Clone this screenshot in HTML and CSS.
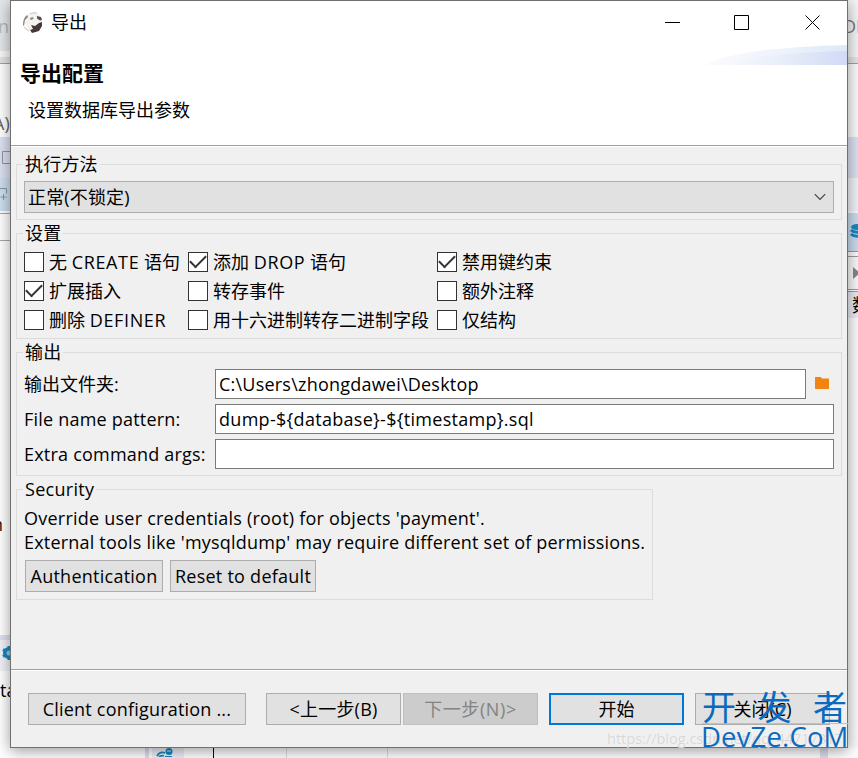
FILE: index.html
```html
<!DOCTYPE html>
<html lang="zh-CN">
<head>
<meta charset="utf-8">
<title>导出</title>
<link rel="stylesheet" href="styles.css">
</head>
<body>
<div class="desk">
  <div class="strip left">
    <div class="s h51 steel"><span class="ghost n1">n</span></div>
    <div class="s h6 pale"></div>
    <div class="s h7 bar"></div>
    <div class="s h73 white"><span class="ghost a1">A)</span></div>
    <div class="s h41 lav"><svg width="10" height="16" viewBox="0 0 10 16"><path d="M10 1.500H2.500v12H10" fill="none" stroke="#8d93a5"/></svg></div>
    <div class="s h35 blue"><svg width="10" height="22" viewBox="0 0 10 22"><path d="M0 4.500h6.500v5M3.500 10v6M.5 13h6" fill="none" stroke="#8296a8"/></svg></div>
    <div class="s h27 white line"></div>
    <div class="s h395 white line"><span class="ghost n2">n</span></div>
    <div class="s h5 lav"></div>
    <div class="s h31 mist"><svg class="gear" width="10" height="16" viewBox="0 0 10 16"><circle cx="9" cy="8" r="4.500" fill="none" stroke="#1687bd" stroke-width="3"/><path d="M9 1v14M3 4.500l12 7M3 11.500l12-7" stroke="#1687bd" stroke-width="3"/><circle cx="9" cy="8" r="2.500" fill="#8dc8e8"/></svg></div>
    <div class="s rest white"><span class="ghost ta">ta</span></div>
  </div>

  <main class="window">
    <header class="head">
      <div class="titlebar">
        <svg class="app" width="22" height="22" viewBox="0 0 22 22">
          <path d="M4 3Q10-1 17 2l3 6-2 8-6 5-5-3-4-7z" fill="#f5f3f2"/>
          <path d="M5 3Q1 6 1 13l1 1 1-6 3-3z" fill="#8e8481"/>
          <path d="M8 2q4-2 7-1" stroke="#c8c2bf" fill="none"/>
          <path d="M15 4l4 1 1 3-2 .5-3-2z" fill="#5a4d4b"/>
          <path d="M8 6l3-1 .5 2-3 1z" fill="#8b817d"/>
          <path d="M9 13l4 1 4-3 3-1v4l-3 5-7 2-2-3 3-1z" fill="#463936"/>
          <path d="M2 15l3 3 2 1" stroke="#ddd8d5" fill="none" stroke-width="1.500"/>
        </svg>
        <span class="caption">导出</span>
        <svg class="sys" width="158" height="17" viewBox="0 0 158 17"><path d="M1 8.500h15M70.500 1.500h14v14h-14zM141.500 1.500l14 14M155.500 1.500l-14 14" fill="none" stroke="#000"/></svg>
      </div>
      <svg class="swoosh" width="141" height="20" viewBox="0 0 141 20">
        <defs><linearGradient id="g"><stop offset="0" stop-color="#fafbfe"/><stop offset=".5" stop-color="#eff3fb"/><stop offset="1" stop-color="#dfe8f7"/></linearGradient><linearGradient id="h"><stop offset="0" stop-color="#f4f7fd" stop-opacity="0"/><stop offset="1" stop-color="#d0daf4"/></linearGradient></defs>
        <path d="M0 20Q28 3 141 0v20z" fill="url(#g)"/><path d="M10 20Q55 8 141 6v14z" fill="url(#h)"/>
      </svg>
      <h1>导出配置</h1>
      <p>设置数据库导出参数</p>
    </header>

    <section class="content">
      <fieldset class="g-method"><legend>执行方法</legend>
        <div class="combo"><span>正常(不锁定)</span><svg width="12" height="8" viewBox="0 0 12 8"><path d="M.8 1.200L6 6.400l5.200-5.200" fill="none" stroke="#444" stroke-width="1.200"/></svg></div>
      </fieldset>
      <fieldset class="g-set"><legend>设置</legend>
        <div class="checks">
          <label><i></i><span>无 <b>CREATE</b> 语句</span></label>
          <label><i class="on"></i><span>添加 <b>DROP</b> 语句</span></label>
          <label><i class="on"></i><span>禁用键约束</span></label>
          <label><i class="on"></i><span>扩展插入</span></label>
          <label><i></i><span>转存事件</span></label>
          <label><i></i><span>额外注释</span></label>
          <label><i></i><span>删除 <b>DEFINER</b></span></label>
          <label><i></i><span>用十六进制转存二进制字段</span></label>
          <label><i></i><span>仅结构</span></label>
        </div>
      </fieldset>
      <fieldset class="g-out"><legend>输出</legend>
        <div class="row"><span class="lab">输出文件夹:</span><div class="field f1">C:\Users\zhongdawei\Desktop</div>
          <svg class="folder" width="14" height="13" viewBox="0 0 14 13"><path d="M0 0h6l1 1.500h7V12H0z" fill="#f28511"/></svg></div>
        <div class="row"><span class="lab en-text">File name pattern:</span><div class="field f2">dump-${database}-${timestamp}.sql</div></div>
        <div class="row"><span class="lab en-text">Extra command args:</span><div class="field"></div></div>
      </fieldset>
      <fieldset class="g-sec"><legend>Security</legend>
        <p class="p1">Override user credentials (root) for objects 'payment'.</p>
        <p class="p2">External tools like 'mysqldump' may require different set of permissions.</p>
        <div class="btns"><button class="auth">Authentication</button><button class="reset">Reset to default</button></div>
      </fieldset>
    </section>

    <footer class="foot">
      <button class="client">Client configuration ...</button>
      <button class="back">&lt;上一步(B)</button>
      <button class="next" disabled>下一步(N)&gt;</button>
      <button class="start">开始</button>
      <button class="close">关闭(C)</button>
    </footer>
  </main>

  <div class="strip right">
    <div class="s h57 r1"><span class="ghost di">DI</span></div>
    <div class="s h7 bar"></div>
    <div class="s h73 r2"></div>
    <div class="s h41 r3"></div>
    <div class="s h35 r4"></div>
    <div class="s h39 r5"><svg width="10" height="18" viewBox="0 0 10 18"><ellipse cx="9" cy="4" rx="6" ry="3" fill="#1687bd"/><path d="M3 7q3 3 9 2M3 11q3 3 9 2" stroke="#1687bd" stroke-width="3" fill="none"/></svg></div>
    <div class="s gap"></div>
    <div class="s h34 r6"><svg width="10" height="14" viewBox="0 0 10 14"><path d="M5 1l7 6-7 6z" fill="#858585"/></svg></div>
    <div class="s h27 r7"><span class="ghost sh">数</span></div>
    <div class="s rest r2"></div>
  </div>

  <div class="under">
    <span class="u bar1"></span>
    <span class="u tab"><svg width="18" height="9" viewBox="0 0 18 9"><path d="M1 8q3-5 8-3M3 9q2-2 5-1" stroke="#1687bd" stroke-width="1.800" fill="none"/><circle cx="13" cy="3.500" r="3.500" fill="#1687bd"/><path d="M11 3h4" stroke="#d5edf8"/><path d="M9 8.500h7" stroke="#1687bd"/></svg></span>
    <span class="u c1"></span><span class="u c2"></span><span class="u c3"></span><span class="u bar2"></span>
  </div>
</div>
<div class="url">https://blog.csdn.net/qq_44717317</div>
<div class="mark"><div class="cn"><span>开</span><span>发</span><span>者</span></div><div class="en">DevZe.CoM</div></div>
</body>
</html>
```
FILE: styles.css
```css
* { box-sizing: border-box; }
body { margin: 0; width: 858px; height: 758px; overflow: hidden; background: #fff; color: #000;
  font: 18px/24px "Open Sans", "Noto Sans CJK SC", sans-serif; }
.desk { display: grid; grid-template-columns: 10px 838px 10px; grid-template-rows: 748px 10px; height: 758px; }

.strip { display: flex; flex-direction: column; overflow: hidden; }
.s { flex: none; display: flex; align-items: center; overflow: hidden; }
.s.rest { flex: 1; align-items: flex-start; }
.h5 { height: 5px; } .h6 { height: 6px; } .h7 { height: 7px; } .h27 { height: 27px; } .h34 { height: 34px; }
.h31 { height: 31px; } .h35 { height: 35px; } .h39 { height: 39px; } .h41 { height: 41px; }
.h51 { height: 51px; } .h57 { height: 57px; } .h73 { height: 73px; } .h395 { height: 395px; }
.steel { background: #e3e7ea; } .pale { background: #f7f7f7; } .white { background: #fff; }
.bar { background: #e3e3e3; border-bottom: 1px solid #a0a0a0; }
.lav { background: #dce0f0; } .blue { background: #cddeee; border-bottom: 2px solid #fff; } .mist { background: #f0f2f8; }
.line { border-top: 1px solid #a6a6a6; }
.ghost { flex: none; white-space: nowrap; }
.n1 { color: #b5b8bb; margin-left: -2px; }
.a1 { color: #666; margin: 44px 0 0 -7px; }
.n2 { color: #301010; margin: 172px 0 0 -8px; }
.gear { margin-bottom: 6px; }
.ta { margin-top: 7px; }
.r1 { background: #f4f4f4; } .r2 { background: #fafafa; } .r3 { background: #dce0f0; }
.r4 { background: #f0f1f8; border-bottom: 2px solid #fafafa; } .r5 { background: #c9daeb; border-bottom: 1px solid #999; }
.gap { height: 4px; background: #fafafa; }
.r6 { background: #f7f7f7; border-top: 1px solid #999; border-bottom: 1px solid #999; } 
.r7 { background: #e8eaf3; border-top: 1px solid #999; margin-top: 1px; }
.di { color: #777; margin: -6px 0 0 -5px; } .sh { margin-left: 4px; }

.window { display: flex; flex-direction: column; border: 1px solid #707070; background: #f0f0f0; z-index: 1;
  box-shadow: 0 3px 14px rgba(0,0,0,.4); }
.head { height: 145px; background: #fff; border-bottom: 1px solid #a0a0a0; box-shadow: 0 1px #fff; display: flex; flex-direction: column; }
.titlebar { height: 42px; display: flex; align-items: center; padding: 0 25px 0 11px; }
.app { margin-top: 2px; }
.caption { margin-left: 7px; flex: 1; }
.swoosh { align-self: flex-end; flex: none; margin-top: 2px; }
h1 { margin: -4px 0 0 9px; font-size: 21px; font-weight: 700; line-height: 24px; }
.head p { margin: 13px 0 0 17px; }

.content { height: 523px; padding: 6px 5px 0; display: flex; flex-direction: column; align-items: stretch; }
fieldset { margin: 0; min-width: 0; border: 1px solid #dcdcdc; padding: 0 7px; }
legend { padding: 0 2px; margin-left: -1px; height: 24px; line-height: 24px; letter-spacing: .2px; }
.g-method { height: 68px; }
.combo { margin-top: 5px; height: 32px; border: 1px solid #adadad; background: #e1e1e1; display: flex; align-items: center; justify-content: space-between; padding: 0 7px 0 3px; letter-spacing: .15px; }
.g-set { height: 118px; margin-top: 1px; }
.checks { display: grid; grid-template-columns: 164px 249px 1fr; grid-auto-rows: 29px; margin-top: 2px; }
.checks label { display: flex; align-items: center; white-space: nowrap; }
.checks i { width: 20px; height: 20px; background: #fff; border: 1px solid #333; margin-right: 5px; display: flex; align-items: center; justify-content: center; }
.checks i.on::after { content: ""; width: 14px; height: 7px; border: solid #333; border-width: 0 0 2px 2px; transform: translateY(-2px) rotate(-45deg); }
b { font-weight: inherit; letter-spacing: .65px; }
.g-out { height: 136px; margin-top: 1px; }
.row { display: flex; align-items: center; height: 35px; }
.g-out legend + .row { margin-top: 2px; }
.lab { width: 191px; flex: none; white-space: nowrap; }
.en-text { letter-spacing: .21px; }
.field { flex: 1; height: 30px; border: 1px solid #7a7a7a; background: #fff; padding: 0 3px; line-height: 28px; white-space: nowrap; }
.f1 { letter-spacing: .22px; } .f2 { letter-spacing: .29px; }
.folder { margin: 0 5px 0 9px; }
.g-sec { width: 637px; height: 123px; margin-top: 1px; }
.g-sec legend { letter-spacing: .3px; }
.g-sec p { margin: 0; white-space: nowrap; }
.g-sec .p1 { margin-top: 5px; letter-spacing: .23px; }
.g-sec .p2 { letter-spacing: .2px; }
button { font: inherit; color: #000; height: 32px; padding: 0; border: 1px solid #adadad; background: #e1e1e1; white-space: nowrap; flex: none; }
.btns { display: flex; gap: 7px; margin: 6px 0 0 1px; letter-spacing: .25px; }
.btns button { letter-spacing: .25px; }
.auth { width: 138px; } .reset { width: 146px; }

.foot { flex: 1; border-top: 1px solid #a0a0a0; box-shadow: inset 0 1px #fff; display: flex; padding: 23px 0 0 17px; }
.client { width: 218px; margin-right: 20px; letter-spacing: .2px; } .back { width: 135px; margin-right: 2px; letter-spacing: .2px; }
.next { width: 135px; margin-right: 11px; background: #ccc; border-color: #bfbfbf; color: #838383; letter-spacing: .6px; }
.start { width: 135px; margin-right: 11px; border: 2px solid #0078d7; } .close { width: 135px; }

.under { grid-column: 1 / 4; display: flex; padding-left: 145px; }
.u { height: 10px; flex: none; }
.bar1 { width: 4px; background: #dce0f0; margin-right: 3px; }
.tab { width: 32px; background: #eef0f8; padding-left: 4px; line-height: 0; }
.c1 { width: 1px; background: #000; margin-left: 29px; }
.c2 { width: 1px; background: #ddd; margin-left: 72px; }
.c3 { width: 1px; background: #ddd; margin-left: 100px; }
.bar2 { width: 8px; background: #dce0f0; margin-left: 432px; }

.url { position: absolute; left: 607px; top: 729px; z-index: 2; font-size: 14.500px; line-height: 20px; color: rgba(205,205,205,.8); text-shadow: 0 0 1px #fff; }
.mark { position: absolute; left: 702px; top: 692px; z-index: 3; width: 147px; color: #0b6abf; }
.cn { display: flex; justify-content: space-between; font-size: 34px; line-height: 31px; height: 32px; border-bottom: 1px solid #8fd0ee; }
.cn span { width: 36px; }
.en { font-size: 27.500px; line-height: 26px; letter-spacing: .15px; margin-left: -1px; }
```
